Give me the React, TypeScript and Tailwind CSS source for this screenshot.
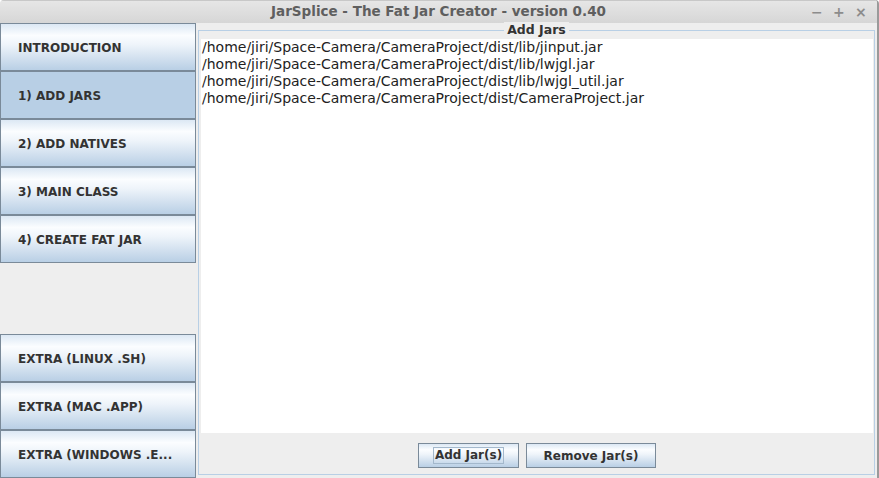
import React from "react";

const navTop = ["INTRODUCTION", "1) ADD JARS", "2) ADD NATIVES", "3) MAIN CLASS", "4) CREATE FAT JAR"];
const navBottom = ["EXTRA (LINUX .SH)", "EXTRA (MAC .APP)", "EXTRA (WINDOWS .E..."];
const jars = [
  "/home/jiri/Space-Camera/CameraProject/dist/lib/jinput.jar",
  "/home/jiri/Space-Camera/CameraProject/dist/lib/lwjgl.jar",
  "/home/jiri/Space-Camera/CameraProject/dist/lib/lwjgl_util.jar",
  "/home/jiri/Space-Camera/CameraProject/dist/CameraProject.jar",
];

const grad = "bg-[linear-gradient(to_bottom,#dce8f4_0%,#fbfdff_25%,#eef4fa_45%,#b9cfe5_100%)]";

function NavButton({ label, selected }: { label: string; selected?: boolean }) {
  return (
    <div
      className={`h-[48px] border border-[#7a8a99] flex items-center pt-[2px] pl-[17px] text-[12px] font-bold text-[#333333] ${
        selected ? "bg-[#b8cfe5]" : grad
      }`}
    >
      {label}
    </div>
  );
}

export default function App() {
  return (
    <div
      className="w-[879px] h-[478px] bg-[#eeeeee] flex flex-col overflow-hidden border-r-2 border-[#9a9a9a] rounded-t-[4px]"
      style={{ fontFamily: '"DejaVu Sans", sans-serif' }}
    >
      {/* Title bar */}
      <div className="h-[23px] flex items-center relative bg-[linear-gradient(to_bottom,#e6e6e6,#d6d6d6)] border-t border-[#c8c8c8]">
        <div className="flex-1 text-center text-[13.5px] font-bold text-[#5f5f5f] leading-none">
          JarSplice - The Fat Jar Creator - version 0.40
        </div>
        <div className="absolute right-[12px] top-0 h-full flex items-center gap-[12px] text-[#8c8c8c] text-[14px] font-bold">
          <span className="w-[10px] text-center">−</span>
          <span className="w-[10px] text-center">+</span>
          <span className="w-[10px] text-center">×</span>
        </div>
      </div>

      <div className="flex-1 flex">
        {/* Left nav */}
        <div className="w-[196px] flex flex-col">
          {navTop.map((l, i) => (
            <NavButton key={l} label={l} selected={i === 1} />
          ))}
          <div className="flex-1" />
          {navBottom.map((l) => (
            <NavButton key={l} label={l} />
          ))}
        </div>

        {/* Right panel */}
        <div className="flex-1 pl-[2px] pr-[2px] pt-[7px] pb-[3px] flex">
          <div className="flex-1 relative border border-[#b8cfe5] flex flex-col pt-[8px] pl-[2px] pr-[1px]">
            <div className="absolute -top-[9px] left-0 right-0 flex justify-center">
              <span className="bg-[#eeeeee] px-[3px] text-[12.5px] font-bold text-[#333333] leading-[16px]">
                Add Jars
              </span>
            </div>
            <div className="flex-1 bg-white">
              {jars.map((j) => (
                <div key={j} className="h-[17px] leading-[17px] text-[14px] text-[#222222] pl-[1px]">
                  {j}
                </div>
              ))}
            </div>
            <div className="h-[41px] flex justify-center items-start pt-[10px] gap-[7px]">
              <button className={`w-[101px] h-[25px] border border-[#7a8a99] ${grad} flex items-center justify-center`}>
                <span className="border border-[#a3b8cc] px-[1px] text-[12px] font-bold text-[#333333] leading-[15px]">
                  Add Jar(s)
                </span>
              </button>
              <button
                className={`w-[130px] h-[25px] border border-[#7a8a99] ${grad} flex items-center justify-center text-[12px] font-bold text-[#333333]`}
              >
                Remove Jar(s)
              </button>
            </div>
          </div>
        </div>
      </div>
    </div>
  );
}
